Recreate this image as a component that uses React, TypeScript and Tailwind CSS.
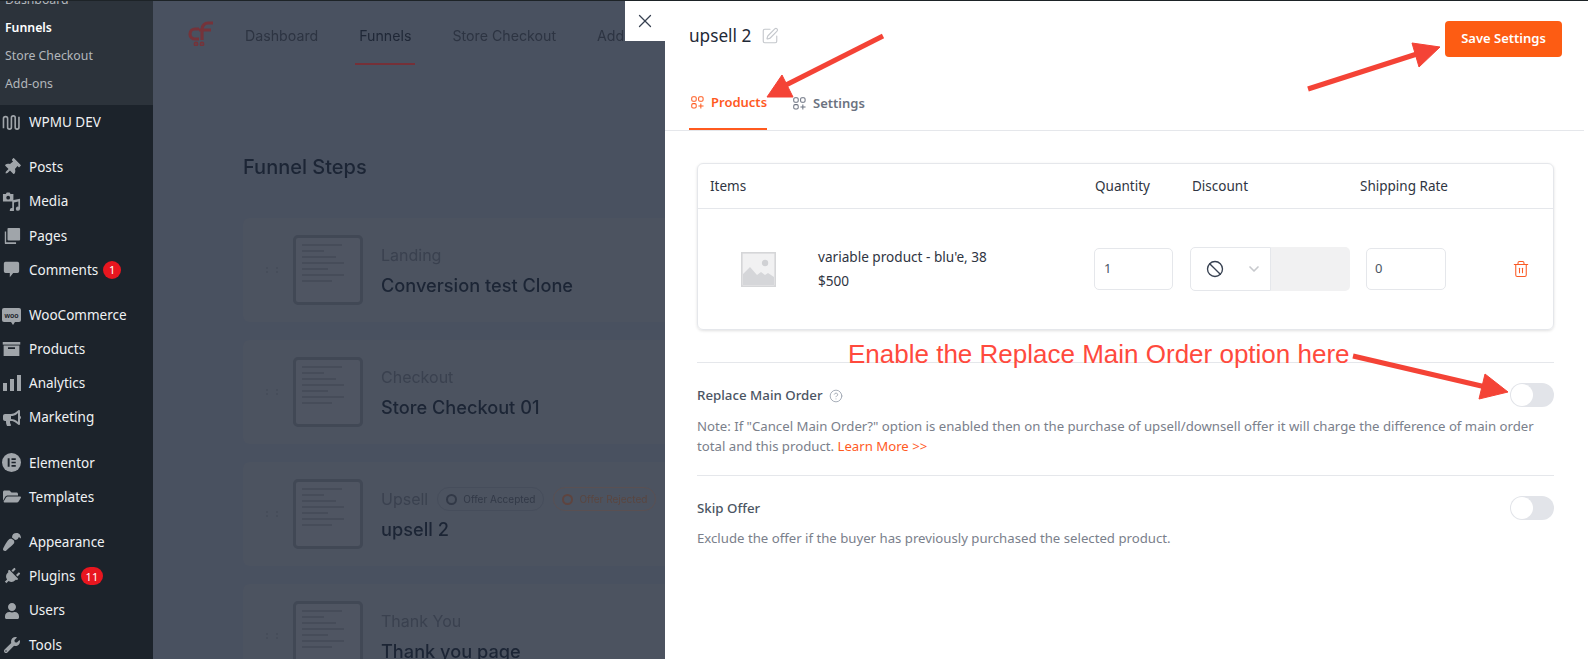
import type { ReactNode } from "react";
import {
  FaBullhorn,
  FaFolderOpen,
  FaPaintBrush,
  FaPlug,
  FaUser,
  FaWrench,
  FaThumbtack,
} from "react-icons/fa";
import { Ban, ChevronDown, CircleHelp, SquarePen, Trash2, X } from "lucide-react";

function WpmuIcon() {
  return (
    <svg viewBox="0 0 20 18" className="h-[17px] w-[19px]" fill="none" stroke="currentColor" strokeWidth="1.7">
      <path d="M1.5 15V5a2.2 2.2 0 0 1 4.4 0v9a2 2 0 0 0 4 0V4a2 2 0 0 1 4 0v10a2 2 0 0 0 4 0V3" />
    </svg>
  );
}

function MediaIcon() {
  return (
    <svg viewBox="0 0 20 20" className="h-[19px] w-[19px]" fill="currentColor">
      <path d="M1 2h3l1-1.5h3L9 2h3v8H1z" />
      <circle cx="6.5" cy="6" r="2" fill="#1c232b" />
      <path d="M19 7v10.5a2.2 2.2 0 1 1-1.8-2.1V10l-4.6 1v8a2.2 2.2 0 1 1-1.8-2.1V8.6z" />
    </svg>
  );
}

function PagesIcon() {
  return (
    <svg viewBox="0 0 20 20" className="h-[18px] w-[18px]" fill="currentColor">
      <path d="M6 1h12a1 1 0 0 1 1 1v12a1 1 0 0 1-1 1H6a1 1 0 0 1-1-1V2a1 1 0 0 1 1-1z" />
      <path d="M2 5h1.5v12h11V19H3a1 1 0 0 1-1-1z" />
    </svg>
  );
}

function CommentsIcon() {
  return (
    <svg viewBox="0 0 20 20" className="h-[17px] w-[17px]" fill="currentColor">
      <path d="M3 1h14a2 2 0 0 1 2 2v9a2 2 0 0 1-2 2h-5l-4 5v-5H3a2 2 0 0 1-2-2V3a2 2 0 0 1 2-2z" />
    </svg>
  );
}

function WooIcon() {
  return (
    <div className="relative flex h-[14px] w-[19px] items-center justify-center rounded-[2px] bg-[#a0a5aa] font-['Liberation_Sans',sans-serif] text-[7px] leading-none font-bold text-[#1c232b]">
      woo
      <div className="absolute -bottom-[3px] left-[9px] h-0 w-0 border-x-[2px] border-t-[3px] border-x-transparent border-t-[#a0a5aa]" />
    </div>
  );
}

function ProductsIcon() {
  return (
    <svg viewBox="0 0 20 16" className="h-[14px] w-[19px]" fill="currentColor">
      <path d="M0 0h20v3H0z" />
      <path d="M1 4h18v12H1zM6 6v2h8V6z" fillRule="evenodd" />
    </svg>
  );
}

function AnalyticsIcon() {
  return (
    <svg viewBox="0 0 18 16" className="h-[16px] w-[18px]" fill="currentColor">
      <path d="M0 8h4v8H0zM7 4h4v12H7zM14 0h4v16h-4z" />
    </svg>
  );
}

function ElementorIcon() {
  return (
    <svg viewBox="0 0 20 20" className="h-[19px] w-[19px]">
      <circle cx="10" cy="10" r="10" fill="currentColor" />
      <path d="M6 5.500h2v9H6zM10 5.500h4.500v1.800H10zM10 9.100h4.500v1.800H10zM10 12.700h4.500v1.800H10z" fill="#1c232b" />
    </svg>
  );
}

function ShapesIcon({ className }: { className: string }) {
  return (
    <svg viewBox="0 0 14 14" className={className} fill="none" stroke="currentColor" strokeWidth="1.1">
      <rect x="0.8" y="0.8" width="4.8" height="4.800" rx="1.4" />
      <rect x="8.2" y="0.8" width="4.8" height="4.800" rx="1.4" />
      <rect x="0.8" y="8.2" width="4.8" height="4.800" rx="1.4" />
      <path d="M10.600 8v5.500M8 10.700h5.500" />
    </svg>
  );
}

function PlaceholderImage() {
  return (
    <svg viewBox="0 0 35 35" className="h-[35px] w-[35px]">
      <rect x="0.8" y="0.8" width="33.4" height="33.4" fill="#f1f1f2" stroke="#d5d6d8" strokeWidth="1.600" />
      <circle cx="24" cy="11" r="3.200" fill="#d0d1d4" />
      <path d="M2 30V22l7-7 7 8 4-3 4 3 3-2 6 4v8H2z" fill="#d5d6d9" />
    </svg>
  );
}

function NavRow({ icon, label, badge }: { icon: ReactNode; label: string; badge?: string }) {
  return (
    <div className="flex h-[34.2px] shrink-0 items-center text-[13.5px] text-[#f0f2f4]">
      <div className="flex w-[29px] shrink-0 items-center justify-center pr-[7px] pl-[1px] text-[#a0a5aa]">{icon}</div>
      <span>{label}</span>
      {badge && (
        <span className="ml-[5px] flex h-[18px] min-w-[18px] items-center justify-center rounded-full bg-[#e8161f] px-[5px] text-[11px] leading-none text-white">
          {badge}
        </span>
      )}
    </div>
  );
}

function NavGroup({ children }: { children: ReactNode }) {
  return <div className="mt-[11px] shrink-0">{children}</div>;
}

function Sidebar() {
  return (
    <aside className="flex h-[658px] w-[153px] shrink-0 flex-col overflow-hidden bg-[#1c232b] font-['Noto_Sans',sans-serif]">
      <div className="flex h-[104px] shrink-0 flex-col justify-end overflow-hidden bg-[#2c333b] pb-[7px] pl-[5px] text-[12.3px] text-[#b3b7bb]">
        <div className="flex h-[28px] shrink-0 items-center">Dashboard</div>
        <div className="flex h-[28px] shrink-0 items-center font-semibold text-white">Funnels</div>
        <div className="flex h-[28px] shrink-0 items-center">Store Checkout</div>
        <div className="flex h-[28px] shrink-0 items-center">Add-ons</div>
      </div>
      <NavRow icon={<WpmuIcon />} label="WPMU DEV" />
      <NavGroup>
        <NavRow icon={<FaThumbtack className="h-[17px] w-[17px] rotate-45" />} label="Posts" />
        <NavRow icon={<MediaIcon />} label="Media" />
        <NavRow icon={<PagesIcon />} label="Pages" />
        <NavRow icon={<CommentsIcon />} label="Comments" badge="1" />
      </NavGroup>
      <NavGroup>
        <NavRow icon={<WooIcon />} label="WooCommerce" />
        <NavRow icon={<ProductsIcon />} label="Products" />
        <NavRow icon={<AnalyticsIcon />} label="Analytics" />
        <NavRow icon={<FaBullhorn className="h-[18px] w-[18px]" />} label="Marketing" />
      </NavGroup>
      <NavGroup>
        <NavRow icon={<ElementorIcon />} label="Elementor" />
        <NavRow icon={<FaFolderOpen className="h-[17px] w-[18px]" />} label="Templates" />
      </NavGroup>
      <NavGroup>
        <NavRow icon={<FaPaintBrush className="h-[18px] w-[18px] rotate-180" />} label="Appearance" />
        <NavRow icon={<FaPlug className="h-[17px] w-[17px] rotate-45" />} label="Plugins" badge="11" />
        <NavRow icon={<FaUser className="h-[16px] w-[16px]" />} label="Users" />
        <NavRow icon={<FaWrench className="h-[16px] w-[16px]" />} label="Tools" />
      </NavGroup>
    </aside>
  );
}

function Thumb({ lines }: { lines: string[] }) {
  return (
    <div className="flex h-[70px] w-[70px] shrink-0 flex-col gap-[4px] rounded-[5px] border-[3px] border-[#414855] bg-[#4f5562] p-[6px]">
      {lines.map((w, i) => (
        <div key={i} className={`${w} h-[2px] bg-[#464c59]`} />
      ))}
    </div>
  );
}

function StepCard({ type, name, lines, extra }: { type: string; name: string; lines: string[]; extra?: ReactNode }) {
  return (
    <div className="flex h-[104px] shrink-0 items-center rounded-[6px] bg-[#4c5360]">
      <div className="grid w-[50px] shrink-0 grid-cols-2 justify-items-center gap-[2px] pr-[12px] pl-[20px]">
        {[0, 1, 2, 3].map((i) => (
          <div key={i} className="h-[2px] w-[2px] bg-[#464d5a]" />
        ))}
      </div>
      <Thumb lines={lines} />
      <div className="ml-[18px] flex flex-col">
        <div className="flex items-center gap-[9px]">
          <span className="text-[16px] leading-[26px] text-[#3a414f]">{type}</span>
          {extra}
        </div>
        <span className="mt-[4px] text-[18.2px] leading-[26px] font-medium whitespace-nowrap text-[#1c2535]">{name}</span>
      </div>
    </div>
  );
}

function BackPage() {
  const lines = ["w-[40px]", "w-[22px]", "w-[34px]", "w-[42px]", "w-[26px]", "w-[42px]", "w-[30px]"];
  return (
    <main className="min-w-0 flex-1 overflow-hidden bg-[#495160] font-['Inter',sans-serif]">
      <div className="flex flex-col blur-[0.5px]">
        <header className="flex h-[64px] shrink-0 items-start pl-[34px] text-[14.2px] text-[#2d3442]">
          <svg viewBox="0 0 28 26" className="mt-[19px] mr-[30px] h-[26px] w-[28px]" fill="none" stroke="#75333a" strokeWidth="3.200">
            <path d="M12 9H8a5 5 0 0 0 0 10h4" />
            <path d="M15 20V9a6 6 0 0 1 6-6h5M12 10h12" />
            <circle cx="9" cy="24" r="0.8" />
            <circle cx="15" cy="24" r="0.8" />
          </svg>
          <span className="mt-[24px]">Dashboard</span>
          <div className="ml-[37px] flex h-full flex-col items-center border-b-2 border-[#753038] px-[4px] pt-[24px] text-[#1f2736]">
            Funnels
          </div>
          <span className="mt-[24px] ml-[37px] whitespace-nowrap">Store Checkout</span>
          <span className="mt-[24px] ml-[41px] whitespace-nowrap">Add-ons</span>
        </header>
        <div className="flex flex-col pl-[90px]">
          <h2 className="mt-[88px] text-[20px] leading-[28px] font-medium text-[#1c2535]">Funnel Steps</h2>
          <div className="mt-[37px] flex w-[500px] flex-col gap-[18px]">
            <StepCard type="Landing" name="Conversion test Clone" lines={lines} />
            <StepCard type="Checkout" name="Store Checkout 01" lines={lines} />
            <StepCard
              type="Upsell"
              name="upsell 2"
              lines={lines}
              extra={
                <>
                  <span className="flex h-[24px] items-center gap-[6px] rounded-full border border-[#464d5b] px-[8px] text-[10px] whitespace-nowrap text-[#323947]">
                    <span className="h-[11px] w-[11px] rounded-full border-2 border-[#323947]" />
                    Offer Accepted
                  </span>
                  <span className="flex h-[24px] items-center gap-[6px] rounded-full border border-[#5a5052] px-[8px] text-[10px] whitespace-nowrap text-[#5a4640]">
                    <span className="h-[11px] w-[11px] rounded-full border-2 border-[#5e443f]" />
                    Offer Rejected
                  </span>
                </>
              }
            />
            <StepCard type="Thank You" name="Thank you page" lines={lines} />
          </div>
        </div>
      </div>
    </main>
  );
}

function ToggleRow({ title, help }: { title: string; help?: boolean }) {
  return (
    <div className="flex h-[24px] items-center justify-between">
      <div className="flex items-center gap-[6px] pt-[2px] text-[13.3px] font-medium text-[#4b5563]">
        {title}
        {help && <CircleHelp className="h-[14px] w-[14px] text-[#9ca3af]" strokeWidth={1.5} />}
      </div>
      <div className="flex h-[24px] w-[44px] items-center rounded-full bg-[#e2e4e9] pl-[1px]">
        <div className="h-[22px] w-[22px] rounded-full bg-white" />
      </div>
    </div>
  );
}

function Panel() {
  return (
    <section className="absolute top-px right-0 bottom-0 left-[665px] flex flex-col bg-white font-['Noto_Sans',sans-serif]">
      <button className="absolute top-0 -left-[40px] flex h-[40px] w-[40px] items-center justify-center bg-white text-[#374151]">
        <X className="h-[22px] w-[22px]" strokeWidth={1.4} />
      </button>

      <div className="mr-[4px] flex h-[130px] shrink-0 flex-col border-b border-[#e5e7eb] pl-[24px]">
        <div className="mt-[20px] flex h-[36px] items-center justify-between">
          <div className="-mt-[6px] flex items-center gap-[10px]">
            <span className="text-[17.2px] text-[#1f2937]">upsell 2</span>
            <SquarePen className="h-[18px] w-[18px] text-[#c4c7cc]" strokeWidth={1.5} />
          </div>
          <button className="mr-[22px] h-[36px] w-[117px] rounded-[4px] bg-[#fd5c13] text-[13px] font-semibold text-white">
            Save Settings
          </button>
        </div>
        <div className="mt-auto flex gap-[26px] text-[13px] font-semibold">
          <div className="-mb-px flex h-[53px] items-center gap-[7px] border-b-2 border-[#ff5a1f] pl-[2px] text-[#ff5a1f]">
            <ShapesIcon className="h-[13px] w-[13px]" />
            Products
          </div>
          <div className="flex h-[53px] items-center gap-[7px] text-[#6b7280]">
            <ShapesIcon className="h-[13px] w-[13px]" />
            Settings
          </div>
        </div>
      </div>

      <div className="flex flex-col pr-[34px] pl-[32px]">
        <div className="mt-[32px] h-[167px] rounded-[6px] border border-[#e5e7eb] shadow-[0_1px_3px_rgba(0,0,0,0.12)]">
          <div className="grid h-[45px] grid-cols-[396px_96px_169px_1fr] items-center border-b border-[#e5e7eb] text-[13.5px] text-[#2f3542]">
            <span className="pl-[12px]">Items</span>
            <span className="pl-[1px]">Quantity</span>
            <span className="pl-[2px]">Discount</span>
            <span className="pl-[1px]">Shipping Rate</span>
          </div>
          <div className="grid h-[120px] grid-cols-[396px_96px_169px_1fr] items-center">
            <div className="flex items-center pl-[43px]">
              <PlaceholderImage />
              <div className="ml-[42px] flex flex-col gap-[6px] text-[13.6px] leading-[18px] text-[#2f3542]">
                <span>variable product - blu'e, 38</span>
                <span>$500</span>
              </div>
            </div>
            <div className="flex h-[42px] w-[79px] items-center rounded-[5px] border border-[#e5e7eb] pl-[9px] text-[13px] text-[#4b5563]">1</div>
            <div className="flex h-[44px] w-[160px] items-stretch">
              <div className="flex w-[81px] items-center justify-between rounded-l-[5px] border border-[#e5e7eb] pr-[8px] pl-[15px]">
                <Ban className="h-[18px] w-[18px] text-[#374151]" strokeWidth={1.8} />
                <ChevronDown className="h-[16px] w-[16px] text-[#c7c9cd]" strokeWidth={2.5} />
              </div>
              <div className="flex-1 rounded-r-[5px] bg-[#f1f1f2]" />
            </div>
            <div className="flex items-center">
              <div className="ml-[7px] flex h-[42px] w-[80px] items-center rounded-[5px] border border-[#e5e7eb] pl-[8px] text-[13px] text-[#4b5563]">0</div>
              <Trash2 className="ml-[66px] h-[18px] w-[18px] text-[#fb5a24]" strokeWidth={1.4} />
            </div>
          </div>
        </div>

        <div className="mt-[32px] border-t border-[#e5e7eb] pt-[20px] pb-[19px]">
          <ToggleRow title="Replace Main Order" help />
          <p className="mt-[9px] text-[13.2px] leading-[20px] whitespace-nowrap text-[#7a808b]">
            Note: If "Cancel Main Order?" option is enabled then on the purchase of upsell/downsell offer it will charge the difference of main order
            <br />
            total and this product. <span className="text-[#ff5a1f]">Learn More &gt;&gt;</span>
          </p>
        </div>
        <div className="border-t border-[#e5e7eb] pt-[20px]">
          <ToggleRow title="Skip Offer" />
          <p className="mt-[8px] text-[13.2px] leading-[20px] text-[#7a808b]">
            Exclude the offer if the buyer has previously purchased the selected product.
          </p>
        </div>
      </div>
    </section>
  );
}

function Annotations() {
  return (
    <>
      <svg viewBox="0 0 1588 659" className="pointer-events-none absolute inset-0 h-[659px] w-[1588px]" fill="#f44336" stroke="#f44336">
        <path d="M883 36 780 88" strokeWidth="5" fill="none" />
        <path d="M767 97 782 75 793 97z" strokeWidth="1" />
        <path d="M1308 89 1420 53" strokeWidth="5" fill="none" />
        <path d="M1440 47 1412 43 1419 67z" strokeWidth="1" />
        <path d="M1353 356 1490 388" strokeWidth="5" fill="none" />
        <path d="M1508 392 1485 374 1479 399z" strokeWidth="1" />
      </svg>
      <span className="absolute top-[339px] left-[848px] font-['Liberation_Sans',sans-serif] text-[26px] leading-[30px] whitespace-nowrap text-[#ff4a3d]">
        Enable the Replace Main Order option here
      </span>
    </>
  );
}

export default function App() {
  return (
    <div className="relative h-[659px] w-[1588px] overflow-hidden bg-white">
      <div className="h-px bg-[#1d2327]" />
      <div className="flex h-[658px]">
        <Sidebar />
        <BackPage />
      </div>
      <Panel />
      <Annotations />
    </div>
  );
}
